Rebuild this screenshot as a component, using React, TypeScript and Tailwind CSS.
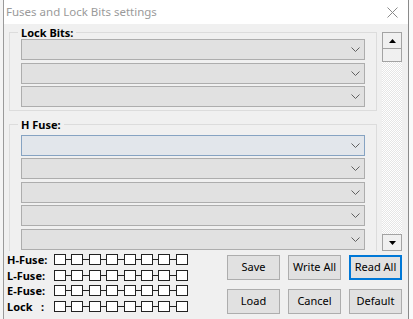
import React from 'react';

const Combo: React.FC<{ focused?: boolean }> = ({ focused }) => (
  <div
    className={`h-[21px] flex items-center justify-end pr-[4px] border ${
      focused ? 'border-[#86a3c2] bg-[#e2e6eb]' : 'border-[#adadad] bg-[#e1e1e1]'
    }`}
  >
    <svg width="9" height="5" viewBox="0 0 9 5">
      <path d="M0.5 0.5 L4.5 4.5 L8.5 0.5" stroke="#606060" fill="none" />
    </svg>
  </div>
);

const Group: React.FC<{ title: string; className?: string; children: React.ReactNode }> = ({
  title,
  className,
  children,
}) => (
  <fieldset className={`border border-[#dcdcdc] px-[11px] pb-[3px] ${className ?? ''}`}>
    <legend className="-ml-[3px] px-[3px] text-[11px] leading-[13px] font-bold text-black">{title}</legend>
    <div className="flex flex-col gap-[2.5px]">{children}</div>
  </fieldset>
);

const FuseRow: React.FC<{ label: string }> = ({ label }) => (
  <div className="flex items-center h-[11px]">
    <span className="w-[47px] whitespace-pre text-[11px] font-bold leading-[11px] text-black">{label}</span>
    {Array.from({ length: 8 }).map((_, i) => (
      <React.Fragment key={i}>
        {i > 0 && <div className="w-[5.4px] h-px bg-[#222]" />}
        <div className="w-[12px] h-[11px] border border-[#222] bg-white" />
      </React.Fragment>
    ))}
  </div>
);

const Btn: React.FC<{ label: string; primary?: boolean }> = ({ label, primary }) => (
  <button
    className={`w-[53px] h-[25px] flex items-center justify-center text-[11px] text-black bg-[#e1e1e1] ${
      primary ? 'border-2 border-[#0078d7]' : 'border border-[#adadad]'
    }`}
  >
    {label}
  </button>
);

const App: React.FC = () => {
  return (
    <div className="w-[413px] h-[319px] flex overflow-hidden bg-white font-['Noto_Sans',sans-serif]">
      {/* window behind */}
      <div className="w-[3px] bg-[#f4f4f4]" />

      {/* dialog */}
      <div className="w-[406px] flex flex-col border-l border-r border-[#9a9a9a] border-r-[#8a8a8a]">
        {/* title bar */}
        <div className="h-[24px] bg-white flex items-center justify-between pl-[2px] pr-[10px]">
          <span className="text-[11.5px] text-[#9a9a9a]">Fuses and Lock Bits settings</span>
          <svg width="11" height="11" viewBox="0 0 11 11">
            <path d="M0.5 0.5 L10.5 10.5 M10.5 0.5 L0.5 10.5" stroke="#8a8a8a" strokeWidth="1" />
          </svg>
        </div>

        {/* body */}
        <div className="flex-1 bg-[#f0f0f0] flex flex-col">
          {/* scrollable settings */}
          <div className="h-[227px] flex">
            <div className="flex-1 overflow-hidden pl-[5px] pr-[5px] pt-[2px]">
              <Group title="Lock Bits:">
                <Combo />
                <Combo />
                <Combo />
              </Group>
              <Group title="H Fuse:" className="mt-[7px]">
                <div className="h-px" />
                <Combo focused />
                <Combo />
                <Combo />
                <Combo />
                <Combo />
                <Combo />
                <Combo />
              </Group>
            </div>

            {/* scrollbar */}
            <div className="w-[20px] mt-[8px] mr-[6px] flex flex-col bg-[repeating-conic-gradient(#e6e6e6_0%_25%,#ffffff_0%_50%)] bg-[length:2px_2px]">
              <div className="h-[17px] border border-[#a3a3a3] bg-[#f0f0f0] flex items-center justify-center">
                <svg width="7" height="4" viewBox="0 0 7 4">
                  <path d="M0 4 L3.5 0 L7 4 Z" fill="#000" />
                </svg>
              </div>
              <div className="h-[13px] border border-t-0 border-[#a3a3a3] bg-[#f0f0f0]" />
              <div className="flex-1" />
              <div className="h-[17px] border border-[#a3a3a3] bg-[#f0f0f0] flex items-center justify-center">
                <svg width="7" height="4" viewBox="0 0 7 4">
                  <path d="M0 0 L7 0 L3.5 4 Z" fill="#000" />
                </svg>
              </div>
            </div>
          </div>

          {/* bottom: fuse bits + buttons */}
          <div className="flex justify-between pl-[3px] pr-[6px]">
            <div className="mt-[3px] flex flex-col gap-[4.6px]">
              <FuseRow label="H-Fuse:" />
              <FuseRow label="L-Fuse:" />
              <FuseRow label="E-Fuse:" />
              <FuseRow label="Lock   :" />
            </div>
            <div className="mt-[4px] grid grid-cols-3 gap-x-[8px] gap-y-[9px] h-fit">
              <Btn label="Save" />
              <Btn label="Write All" />
              <Btn label="Read All" primary />
              <Btn label="Load" />
              <Btn label="Cancel" />
              <Btn label="Default" />
            </div>
          </div>
        </div>
      </div>

      <div className="flex-1 bg-[#fafafa]" />
    </div>
  );
};

export default App;
